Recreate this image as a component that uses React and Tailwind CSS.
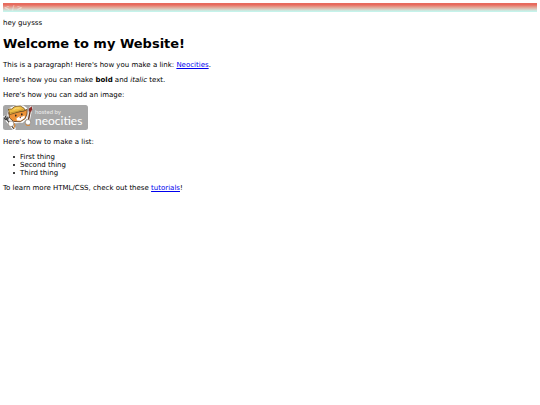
function NeocitiesBadge() {
  return (
    <svg viewBox="0 0 85 25" className="block h-[25px] w-[85px]" role="img" aria-label="Hosted by Neocities">
      <rect width="85" height="25" rx="2.5" fill="#a7a7a7" />
      {/* white outline around the cat */}
      <path
        d="M6 4 9 2.6l5-2 6 .6 3 2L24.6 6l-1 7-4 4-7 .6-5-2-2.6-5z"
        fill="#fff"
        stroke="#fff"
        strokeWidth="1.4"
        strokeLinejoin="round"
      />
      {/* cat head */}
      <path d="M5.6 7.6 6.6 13l4 3.4 6.6.4 5-3.2L24 9l.2-4.6-5 2z" fill="#ee9338" stroke="#54351c" strokeWidth=".8" strokeLinejoin="round" />
      <path d="m13.4 13.4 3-2 2.6.4 2.8-1.4-.2 2.6-4 2.8-3.6-.2z" fill="#fff" />
      {/* yellow hat */}
      <path
        d="M5.4 4 8.6 4l3.4-2.6L17.4 1l3.6 2.2 1.4 2.4-6.4 1.2-9.4 2.8z"
        fill="#eebd45"
        stroke="#6b4a1c"
        strokeWidth=".8"
        strokeLinejoin="round"
      />
      <path d="M7.4 7.8q7-.8 13-3.4" fill="none" stroke="#b38428" strokeWidth=".7" />
      <path d="M10.6 4.6q3-2.2 6-1.6" fill="none" stroke="#fbe187" strokeWidth=".9" />
      <ellipse cx="12.8" cy="10.6" rx=".8" ry="1.1" fill="#2b2320" />
      <ellipse cx="18.8" cy="9.4" rx=".8" ry="1.1" fill="#2b2320" />
      <path d="m16.2 12 2-.4-.6 2z" fill="#8a3324" />
      {/* fork */}
      <path d="m1.8 12.2 9.2 11.4" stroke="#fff" strokeWidth="3.4" strokeLinecap="round" />
      <path d="m.8 12.4 1.6 2.2 2.4-.4.2-2.4M2.2 11l1.6 3.4M3.8 14.4l7.2 9.4" fill="none" stroke="#3f3f3f" strokeWidth="1.3" />
      {/* brush */}
      <path d="M28 2.8 25 17" stroke="#fff" strokeWidth="3" strokeLinecap="round" />
      <path d="M27.2 6 25.4 15" stroke="#6b3a24" strokeWidth="1.4" />
      <path d="M28.8 1.2 26 3.6 25.8 6.6l2.4.2 1-2.6z" fill="#8c2724" />
      {/* paws */}
      <path d="m10 17.4 2 3-1.4 2.8" fill="none" stroke="#e08b36" strokeWidth="1.2" />
      <path d="m22.4 18.4 1.4 1.8 3 .2" fill="none" stroke="#e08b36" strokeWidth="1.2" />
      <circle cx="8" cy="18.8" r="2.8" fill="#fff" stroke="#6b5a4a" strokeWidth=".5" />
      <circle cx="25" cy="17.2" r="2.7" fill="#fff" stroke="#6b5a4a" strokeWidth=".5" />
      <text x="32" y="9" fontSize="6" fill="#ececec" fontFamily="Lato, 'Open Sans', sans-serif">hosted by</text>
      <text x="32" y="20" fontSize="12" fill="#fff" fontFamily="Lato, 'Open Sans', sans-serif">neocities</text>
    </svg>
  );
}

function ListItem({ children }) {
  return (
    <li className="flex items-center gap-[5px] before:size-[2px] before:rounded-full before:bg-black">
      {children}
    </li>
  );
}

export default function App() {
  return (
    <div className="p-[3px] font-['DejaVu_Sans',Verdana,sans-serif] text-[7px] leading-[8px] text-black">
      <header className="bg-linear-to-b from-[#e76b5e] from-20% to-[#c5f3eb] to-90% pt-px pl-px text-white/60">
        &lt; / &gt;
      </header>
      <p className="mt-[7px]">hey guysss</p>
      <h1 className="mt-[9px] text-[13px] leading-[16px] font-bold">Welcome to my Website!</h1>
      <p className="mt-[9px]">
        This is a paragraph! Here's how you make a link:{' '}
        <a href="https://neocities.org" className="text-[#0000ee] underline">Neocities</a>.
      </p>
      <p className="mt-[7px]">
        Here's how you can make <strong className="font-bold">bold</strong> and <em>italic</em> text.
      </p>
      <p className="mt-[7px]">Here's how you can add an image:</p>
      <div className="mt-[6px]">
        <NeocitiesBadge />
      </div>
      <p className="mt-[8px]">Here's how to make a list:</p>
      <ul className="mt-[7px] pl-[10px]">
        <ListItem>First thing</ListItem>
        <ListItem>Second thing</ListItem>
        <ListItem>Third thing</ListItem>
      </ul>
      <p className="mt-[7px]">
        To learn more HTML/CSS, check out these{' '}
        <a href="https://neocities.org/tutorials" className="text-[#0000ee] underline">tutorials</a>!
      </p>
    </div>
  );
}
